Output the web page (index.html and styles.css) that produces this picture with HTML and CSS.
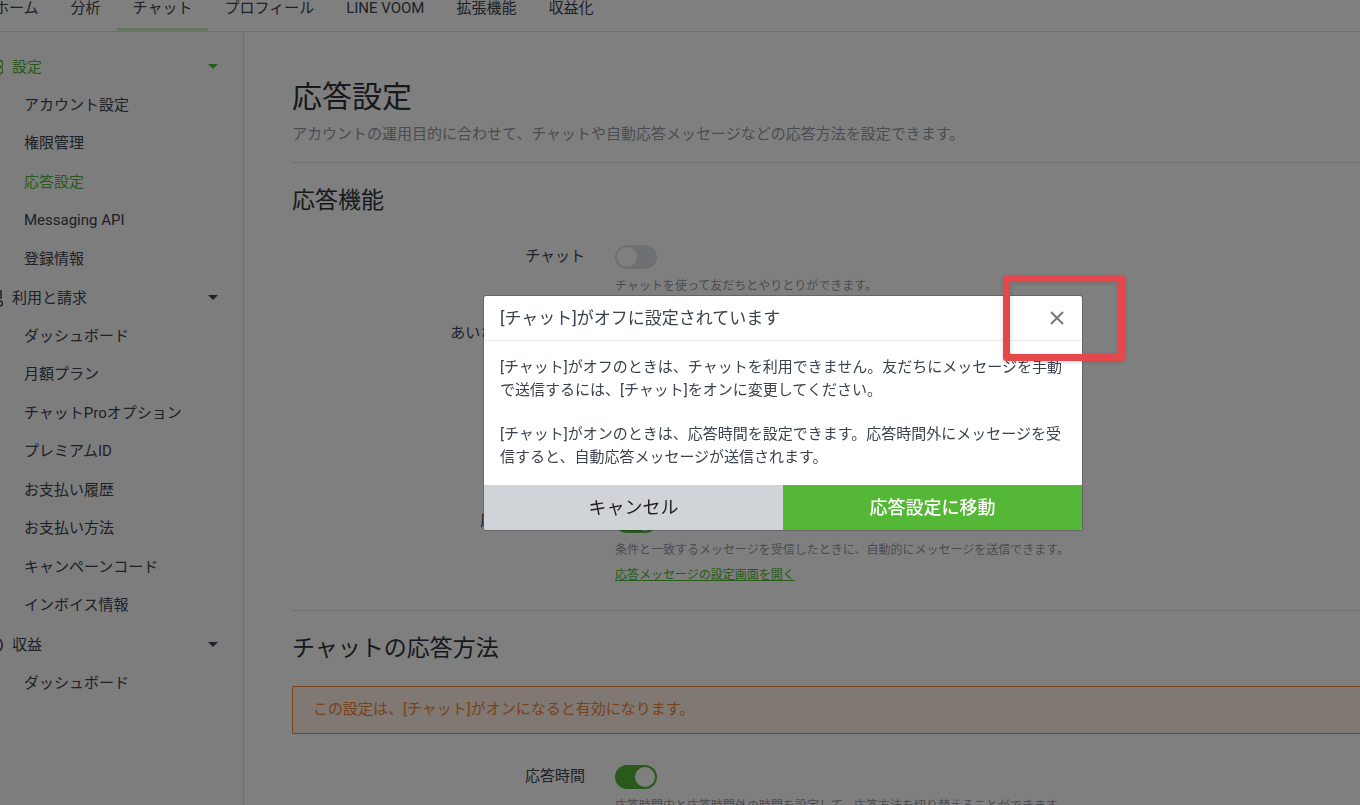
FILE: index.html
```html
<!DOCTYPE html>
<html lang="ja">
<head>
  <meta charset="UTF-8">
  <meta name="viewport" content="width=device-width, initial-scale=1.0">
  <title>応答設定</title>
  <link rel="stylesheet" href="styles.css">
</head>
<body>
  <header class="header">
    <nav class="nav">
      <a href="#">ホーム</a>
      <a href="#">分析</a>
      <a href="#" class="active">チャット</a>
      <a href="#">プロフィール</a>
      <a href="#">LINE VOOM</a>
      <a href="#">拡張機能</a>
      <a href="#">収益化</a>
    </nav>
  </header>

  <div class="layout">
    <aside class="sidebar">
      <button type="button" class="group-title active">
        <svg class="group-icon" viewBox="0 0 18 18"><path d="M9 2.500a3.200 3.200 0 0 1 5-.3 3.400 3.400 0 0 1 1 6.800 3.400 3.400 0 0 1-1 6.800 3.200 3.200 0 0 1-5-.3 3.200 3.200 0 0 1-5 .3A3.400 3.400 0 0 1 3 9a3.400 3.400 0 0 1 1-6.800 3.200 3.200 0 0 1 5 .3z"/><circle cx="9" cy="9" r="2.500"/></svg>
        <span>設定</span>
        <span class="caret"></span>
      </button>
      <ul class="menu">
        <li><a href="#">アカウント設定</a></li>
        <li><a href="#">権限管理</a></li>
        <li><a href="#" class="active">応答設定</a></li>
        <li><a href="#">Messaging API</a></li>
        <li><a href="#">登録情報</a></li>
      </ul>
      <button type="button" class="group-title">
        <svg class="group-icon" viewBox="0 0 18 18"><path d="M2 2h14v8M2 2v14h8M5 6h7M5 10h4M12 12h3a2 2 0 0 1 0 5h-3z"/></svg>
        <span>利用と請求</span>
        <span class="caret"></span>
      </button>
      <ul class="menu">
        <li><a href="#">ダッシュボード</a></li>
        <li><a href="#">月額プラン</a></li>
        <li><a href="#">チャットProオプション</a></li>
        <li><a href="#">プレミアムID</a></li>
        <li><a href="#">お支払い履歴</a></li>
        <li><a href="#">お支払い方法</a></li>
        <li><a href="#">キャンペーンコード</a></li>
        <li><a href="#">インボイス情報</a></li>
      </ul>
      <button type="button" class="group-title">
        <svg class="group-icon" viewBox="0 0 18 18"><circle cx="10" cy="9" r="7.300"/><path d="M7 5l3 4 3-4M10 9v5M7 10h6"/></svg>
        <span>収益</span>
        <span class="caret"></span>
      </button>
      <ul class="menu">
        <li><a href="#">ダッシュボード</a></li>
      </ul>
    </aside>

    <main class="main">
      <h1>応答設定</h1>
      <p class="lead">アカウントの運用目的に合わせて、チャットや自動応答メッセージなどの応答方法を設定できます。</p>

      <section class="section">
        <h2>応答機能</h2>
        <div class="row">
          <label for="chat">チャット</label>
          <div class="field">
            <input type="checkbox" id="chat" class="switch">
            <p class="hint">チャットを使って友だちとやりとりができます。</p>
          </div>
        </div>
        <div class="row tall">
          <label for="greeting">あいさつメッセージ</label>
          <div class="field">
            <input type="checkbox" id="greeting" class="switch" checked>
          </div>
        </div>
        <div class="row">
          <label for="autoReply">応答メッセージ</label>
          <div class="field">
            <input type="checkbox" id="autoReply" class="switch" checked>
            <p class="hint">条件と一致するメッセージを受信したときに、自動的にメッセージを送信できます。</p>
            <a href="#" class="link">応答メッセージの設定画面を開く</a>
          </div>
        </div>
      </section>

      <section class="section">
        <h2>チャットの応答方法</h2>
        <p class="alert">この設定は、[チャット]がオンになると有効になります。</p>
        <div class="row">
          <label for="hours">応答時間</label>
          <div class="field">
            <input type="checkbox" id="hours" class="switch" checked>
            <p class="hint">応答時間内と応答時間外の時間を設定して、応答方法を切り替えることができます。</p>
          </div>
        </div>
      </section>
    </main>
  </div>

  <div class="backdrop"></div>

  <div class="modal" role="dialog" aria-labelledby="modalTitle">
    <div class="modal-header">
      <h3 id="modalTitle">[チャット]がオフに設定されています</h3>
      <button type="button" class="close" aria-label="閉じる">
        <svg viewBox="0 0 14 14"><path d="M1 1l12 12M13 1L1 13"/></svg>
      </button>
    </div>
    <div class="modal-body">
      <p>[チャット]がオフのときは、チャットを利用できません。友だちにメッセージを手動で送信するには、[チャット]をオンに変更してください。</p>
      <p>[チャット]がオンのときは、応答時間を設定できます。応答時間外にメッセージを受信すると、自動応答メッセージが送信されます。</p>
    </div>
    <div class="modal-footer">
      <button type="button" class="btn">キャンセル</button>
      <button type="button" class="btn primary">応答設定に移動</button>
    </div>
  </div>

  <div class="highlight"></div>
</body>
</html>
```

FILE: styles.css
```css
* {
  box-sizing: border-box;
}
body {
  margin: 0;
  height: 100vh;
  overflow: hidden;
  display: flex;
  flex-direction: column;
  font-family: Roboto, "Noto Sans CJK JP", sans-serif;
  font-size: 15px;
  color: #3c424e;
  background-color: #fff;
}
h1, h2, h3, p, ul {
  margin: 0;
  padding: 0;
  font-weight: 400;
}
a {
  color: inherit;
  text-decoration: none;
}
button {
  font: inherit;
  color: inherit;
  border: none;
  background: none;
  padding: 0;
  cursor: pointer;
}
.header {
  flex: none;
  border-bottom: 1px solid #dcdee0;
}
.nav {
  display: flex;
  margin-left: -22px;
}
.nav a {
  padding: 1px 16px 12px;
  line-height: 15px;
  border-bottom: 3px solid transparent;
  white-space: nowrap;
}
.nav a.active {
  border-bottom-color: #cbeabf;
}
.layout {
  flex: 1;
  display: flex;
}
.sidebar {
  flex: none;
  width: 244px;
  padding-top: 15px;
  background-color: #fafafa;
  border-right: 1px solid #dcdee0;
}
.group-title {
  display: flex;
  align-items: center;
  width: 100%;
  height: 39px;
  padding-right: 25px;
}
.group-title span:not(.caret) {
  padding-bottom: 3px;
}
.group-icon {
  width: 18px;
  height: 18px;
  margin-left: -15px;
  margin-right: 9px;
  fill: none;
  stroke: currentColor;
  stroke-width: 1.5;
}
.caret {
  margin-left: auto;
  border: 5px solid transparent;
  border-top-color: currentColor;
  border-bottom: none;
}
.menu {
  list-style: none;
  padding-left: 24px;
}
.menu li {
  line-height: 38px;
}
.menu li:nth-child(even) {
  line-height: 39px;
}
.group-title.active, .menu a.active {
  color: #52b536;
}
.main {
  flex: 1;
  min-width: 0;
  padding: 42px 0 0 48px;
}
h1 {
  font-size: 30px;
  line-height: 46px;
}
h1, h2 {
  color: #303238;
}
.lead {
  line-height: 22px;
  margin-top: 3px;
  padding-bottom: 17px;
  color: #9499a3;
}
.section {
  border-top: 1px solid #dcdee0;
  padding-top: 21px;
  padding-bottom: 26px;
}
h2 {
  font-size: 23px;
  line-height: 34px;
  margin-bottom: 20px;
}
.row {
  display: grid;
  grid-template-columns: 293px 1fr;
  column-gap: 30px;
  margin-bottom: 27px;
}
h2 + .row {
  margin-top: 27px;
}
.row:last-child {
  margin-bottom: 0;
}
.row.tall {
  min-height: 160px;
}
.row label {
  text-align: right;
  line-height: 22px;
}
.switch {
  appearance: none;
  display: block;
  width: 42px;
  height: 24px;
  margin: 0;
  padding: 2px;
  border-radius: 12px;
  background-color: #dee1e6;
  cursor: pointer;
}
.switch::before {
  content: "";
  display: block;
  width: 20px;
  height: 20px;
  border-radius: 50%;
  background-color: #fff;
}
.switch:checked {
  background-color: #52b536;
}
.switch:checked::before {
  margin-left: auto;
}
.hint {
  margin-top: 8px;
  font-size: 12px;
  line-height: 18px;
  color: #9499a3;
}
.link {
  display: inline-block;
  margin-top: 7px;
  font-size: 12px;
  line-height: 18px;
  color: #52b536;
  text-decoration: underline;
}
.alert {
  margin-bottom: 31px;
  padding: 11px 20px 13px;
  line-height: 22px;
  color: #f08437;
  background-color: #fff0e6;
  border: 1px solid #f08437;
  border-right: none;
  border-radius: 2px 0 0 2px;
}
.backdrop {
  position: fixed;
  inset: 0;
  background-color: rgba(0, 0, 0, 0.5);
}
.modal {
  position: fixed;
  top: 295px;
  left: 483px;
  width: 600px;
  background-color: #fff;
  background-clip: padding-box;
  border: 1px solid rgba(0, 0, 0, 0.2);
  border-radius: 3px;
}
.modal-header {
  display: flex;
  align-items: center;
  justify-content: space-between;
  padding: 10px 18px 10px 16px;
  border-bottom: 1px solid #e9eaec;
}
.modal-header h3 {
  font-size: 17px;
  line-height: 24px;
}
.close svg {
  display: block;
  width: 14px;
  height: 14px;
  stroke: #777;
  stroke-width: 2;
}
.modal-body {
  padding: 15px 16px 16px;
  line-height: 23px;
}
.modal-body p + p {
  margin-top: 21px;
}
.modal-footer {
  display: flex;
}
.btn {
  flex: 1;
  height: 45px;
  padding-bottom: 3px;
  font-size: 18px;
  color: #1e2024;
  background-color: #d0d3d8;
  border-radius: 0 0 0 2px;
}
.btn.primary {
  font-weight: 500;
  color: #fff;
  background-color: #54b735;
  border-radius: 0 0 2px 0;
}
.highlight {
  position: fixed;
  top: 275px;
  left: 1003px;
  width: 122px;
  height: 86px;
  border: 7px solid #e5484b;
  border-radius: 3px;
  filter: drop-shadow(0 1px 2px rgba(0, 0, 0, 0.15));
}
```
